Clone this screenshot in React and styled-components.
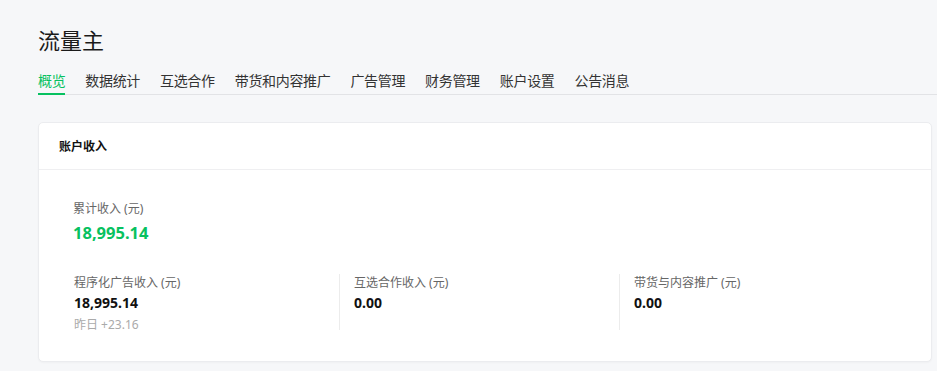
import React from "react";
import styled, { createGlobalStyle } from "styled-components";

const Global = createGlobalStyle`
  html, body { margin: 0; padding: 0; background: #f6f7f9; }
  body {
    font-family: "Noto Sans", "Noto Sans CJK SC", sans-serif;
    color: #1a1a1a;
  }
  * { box-sizing: border-box; }
`;

const Page = styled.div`
  padding: 24px 0 0 38px;
  min-height: 371px;
`;

const Title = styled.h1`
  margin: 0 0 15px;
  font-size: 22px;
  line-height: 32px;
  font-weight: 400;
  color: #1a1a1a;
`;

const Tabs = styled.nav`
  display: flex;
  gap: 20px;
  border-bottom: 1px solid #e2e3e6;
`;

const Tab = styled.div`
  font-size: 14px;
  letter-spacing: -0.33px;
  line-height: 20px;
  padding-bottom: 2px;
  margin-bottom: -1px;
  border-bottom: 2px solid ${(p) => (p.$active ? "#07c160" : "transparent")};
  color: ${(p) => (p.$active ? "#07c160" : "#333")};
  white-space: nowrap;
`;

const Card = styled.section`
  margin: 27px 5px 0 0;
  background: #fff;
  border: 1px solid #ebecef;
  border-radius: 5px;
  box-shadow: 0 1px 2px rgba(0, 0, 0, 0.03);
`;

const CardHeader = styled.div`
  height: 47px;
  display: flex;
  align-items: center;
  padding: 0 20px;
  border-bottom: 1px solid #efeff1;
  font-size: 12px;
  font-weight: 700;
  color: #111;
`;

const CardBody = styled.div`
  padding: 30px 20px 28px;
`;

const Total = styled.div`
  padding-left: 14px;
  margin-bottom: 29px;
`;

const Label = styled.div`
  font-size: 12px;
  line-height: 18px;
  color: #666;
`;

const BigValue = styled.div`
  margin-top: 3px;
  font-size: 16.5px;
  line-height: 24px;
  font-weight: 700;
  color: #07c160;
`;

const Row = styled.div`
  display: flex;
`;

const Col = styled.div`
  width: 280px;
  min-height: 56px;
  padding-left: 14px;
  border-left: 1px solid ${(p) => (p.$divider ? "#ececec" : "transparent")};
  align-self: flex-start;
`;

const Value = styled.div`
  font-size: 14px;
  line-height: 22px;
  font-weight: 700;
  color: #111;
`;

const Sub = styled.div`
  margin-top: 3px;
  font-size: 12px;
  line-height: 16px;
  color: #aaa;
`;

const tabs = ["概览", "数据统计", "互选合作", "带货和内容推广", "广告管理", "财务管理", "账户设置", "公告消息"];

const cols = [
  { label: "程序化广告收入 (元)", value: "18,995.14", sub: "昨日 +23.16" },
  { label: "互选合作收入 (元)", value: "0.00" },
  { label: "带货与内容推广 (元)", value: "0.00" },
];

export default function App() {
  return (
    <>
      <Global />
      <Page>
        <Title>流量主</Title>
        <Tabs>
          {tabs.map((t, i) => (
            <Tab key={t} $active={i === 0}>{t}</Tab>
          ))}
        </Tabs>
        <Card>
          <CardHeader>账户收入</CardHeader>
          <CardBody>
            <Total>
              <Label>累计收入 (元)</Label>
              <BigValue>18,995.14</BigValue>
            </Total>
            <Row>
              {cols.map((c, i) => (
                <Col key={c.label} $divider={i > 0}>
                  <Label>{c.label}</Label>
                  <Value>{c.value}</Value>
                  {c.sub && <Sub>{c.sub}</Sub>}
                </Col>
              ))}
            </Row>
          </CardBody>
        </Card>
      </Page>
    </>
  );
}
